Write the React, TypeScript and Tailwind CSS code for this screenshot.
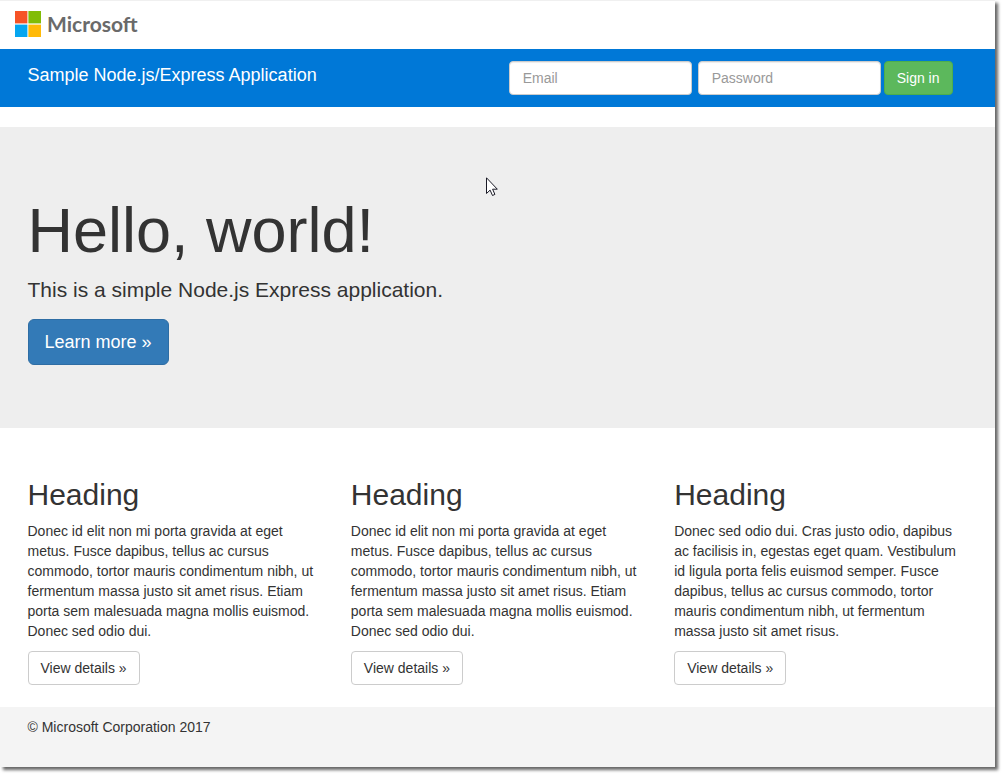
import React from "react";

const donec =
  "Donec id elit non mi porta gravida at eget metus. Fusce dapibus, tellus ac cursus commodo, tortor mauris condimentum nibh, ut fermentum massa justo sit amet risus. Etiam porta sem malesuada magna mollis euismod. Donec sed odio dui.";

const columns = [
  { id: "first", text: donec },
  { id: "second", text: donec },
  {
    id: "third",
    text: "Donec sed odio dui. Cras justo odio, dapibus ac facilisis in, egestas eget quam. Vestibulum id ligula porta felis euismod semper. Fusce dapibus, tellus ac cursus commodo, tortor mauris condimentum nibh, ut fermentum massa justo sit amet risus.",
  },
];

function Container({ children }: { children: React.ReactNode }) {
  return <div className="mx-auto w-full max-w-[970px] px-[15px]">{children}</div>;
}

function Logo() {
  return (
    <a href="#" className="flex items-center gap-[6px]">
      <svg width="26" height="26" viewBox="0 0 26 26" aria-hidden="true">
        <path fill="#f65326" d="M0 0h12.4v12.4H0z" />
        <path fill="#81bc06" d="M13.4 0H26v12.4H13.4z" />
        <path fill="#05a6f0" d="M0 13.6h12.4V26H0z" />
        <path fill="#ffba08" d="M13.4 13.6H26V26H13.4z" />
      </svg>
      <span className="font-[Lato,'Open_Sans',sans-serif] text-[21px] leading-[26px] font-bold text-[#6a6a6a]">
        Microsoft
      </span>
    </a>
  );
}

function Field({ label, type }: { label: string; type: string }) {
  return (
    <input
      type={type}
      aria-label={label}
      placeholder={label}
      className="h-[34px] w-[183px] rounded border border-[#ccc] bg-white px-[13px] text-sm text-[#555] shadow-[inset_0_1px_1px_rgba(0,0,0,0.075)] placeholder:text-[#999]"
    />
  );
}

export default function App() {
  return (
    <div className="bg-white pr-[10px] pb-[10px]">
      <div className="relative bg-white font-['Liberation_Sans',Arial,sans-serif] text-sm leading-5 text-[#333] shadow-[3px_3px_3px_rgba(0,0,0,0.6)]">
        <header className="border-t border-[#f0f0f0] px-[15px] pt-[10px] pb-3">
          <Logo />
        </header>

        <nav className="mb-5 bg-[#0078d7] py-3">
          <Container>
            <div className="flex items-start justify-between pr-[15px]">
              <a href="#" className="py-1 text-lg leading-5 text-white">
                Sample Node.js/Express Application
              </a>
              <form className="flex gap-[3px]" onSubmit={(e) => e.preventDefault()}>
                <div className="flex gap-[6px]">
                  <Field label="Email" type="email" />
                  <Field label="Password" type="password" />
                </div>
                <button
                  type="submit"
                  className="h-[34px] rounded border border-[#4cae4c] bg-[#5cb85c] px-3 text-sm text-white"
                >
                  Sign in
                </button>
              </form>
            </div>
          </Container>
        </nav>

        <section className="mb-[30px] bg-[#eee] pt-[69px] pb-[63px]">
          <Container>
            <h1 className="mb-[10px] text-[63px] leading-[69px]">Hello, world!</h1>
            <p className="mb-[14px] text-[21px] leading-[30px]">
              This is a simple Node.js Express application.
            </p>
            <a
              href="#"
              className="inline-flex h-[46px] items-center rounded-md border border-[#2e6da4] bg-[#337ab7] px-4 align-top text-lg text-white"
            >
              Learn more »
            </a>
          </Container>
        </section>

        <main className="pb-[22px]">
          <Container>
            <div className="-mx-[15px] grid grid-cols-3">
              {columns.map((column) => (
                <article key={column.id} className="px-[15px] pt-5">
                  <h2 className="mb-[10px] text-[30px] leading-[33px]">Heading</h2>
                  <p className="mb-[10px]">{column.text}</p>
                  <a
                    href="#"
                    className="inline-flex h-[34px] items-center rounded border border-[#ccc] bg-white px-3 align-top"
                  >
                    View details »
                  </a>
                </article>
              ))}
            </div>
          </Container>
        </main>

        <footer className="bg-[#f4f4f4] pt-[10px] pb-[30px]">
          <Container>
            <p>© Microsoft Corporation 2017</p>
          </Container>
        </footer>

        <svg
          className="absolute top-[177px] left-[486px]"
          width="12"
          height="20"
          viewBox="0 0 12 20"
          aria-hidden="true"
        >
          <path
            d="M.5.8v15.7l3.6-3.4 2.4 5.4 2.4-1.1-2.3-5.2h4.7z"
            fill="#fff"
            stroke="#1a1a26"
            strokeWidth="1"
          />
        </svg>
      </div>
    </div>
  );
}
